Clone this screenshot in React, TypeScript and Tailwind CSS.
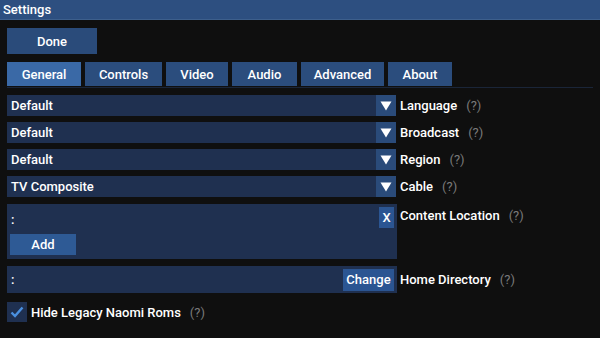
const tabs = [
  { name: 'General', w: 'w-[74px]', active: true },
  { name: 'Controls', w: 'w-[77px]' },
  { name: 'Video', w: 'w-[62px]' },
  { name: 'Audio', w: 'w-[65px]' },
  { name: 'Advanced', w: 'w-[83px]' },
  { name: 'About', w: 'w-[64px]' },
];

const combos = [
  { value: 'Default', label: 'Language' },
  { value: 'Default', label: 'Broadcast' },
  { value: 'Default', label: 'Region' },
  { value: 'TV Composite', label: 'Cable' },
];

const Help = () => <span className="ml-[9px] text-[#7a7a7a] font-normal">(?)</span>;

const Combo = ({ value, label }: { value: string; label: string }) => (
  <div className="flex items-center h-[21px]">
    <div className="flex w-[389px] h-full bg-[#1f3050]">
      <div className="flex-1 flex items-center px-[4px]">{value}</div>
      <div className="w-[20px] h-full bg-[#2a4b7a] flex items-center justify-center">
        <svg width="12" height="10" viewBox="0 0 12 10">
          <path d="M0.5 0.5 L11.5 0.5 L6 9.5 Z" fill="#ffffff" />
        </svg>
      </div>
    </div>
    <div className="ml-[4px] flex items-center">
      {label}
      <Help />
    </div>
  </div>
);

export default function App() {
  return (
    <div
      className="w-[600px] h-[338px] bg-[#0f0f0f] text-white text-[13px] font-medium leading-none overflow-hidden"
      style={{ fontFamily: 'Roboto, "Noto Sans", sans-serif' }}
    >
      <div className="h-[20px] bg-[#2d4f80] border-b border-[#3d5f8c] flex items-center px-[3px]">
        Settings
      </div>
      <div className="px-[7px] pt-[8px]">
        <button className="w-[90px] h-[26px] bg-[#2a4b7a] flex items-center justify-center">Done</button>

        <div className="mt-[8px] flex gap-[4px] h-[26px] pb-[1px] border-b border-[#1a2538]">
          {tabs.map((t) => (
            <div
              key={t.name}
              className={`${t.w} h-full flex items-center justify-center ${t.active ? 'bg-[#3a69a6]' : 'bg-[#2b4d7d]'}`}
            >
              {t.name}
            </div>
          ))}
        </div>

        <div className="mt-[7px] flex flex-col gap-[6px]">
          {combos.map((c, i) => (
            <Combo key={i} value={c.value} label={c.label} />
          ))}

          <div className="flex items-start mt-[1px]">
            <div className="w-[390px] h-[55px] bg-[#1f3050] flex flex-col px-[3px] pt-[3px]">
              <div className="flex justify-between h-[21px]">
                <span className="pl-[1px] pt-[6px]">:</span>
                <div className="w-[15px] h-[21px] bg-[#2b5592] flex items-center justify-center">X</div>
              </div>
              <div className="mt-[6px] w-[66px] h-[21px] bg-[#2e5a95] flex items-center justify-center">Add</div>
            </div>
            <div className="ml-[3px] pt-[5px] flex items-center">
              Content Location
              <Help />
            </div>
          </div>

          <div className="flex items-center mt-[1px]">
            <div className="w-[390px] h-[27px] bg-[#1f3050] flex items-center justify-between pl-[4px] pr-[3px]">
              <span>:</span>
              <div className="w-[51px] h-[22px] bg-[#2b5592] flex items-center justify-center">Change</div>
            </div>
            <div className="ml-[3px] flex items-center">
              Home Directory
              <Help />
            </div>
          </div>

          <div className="flex items-center mt-[3px]">
            <div className="w-[20px] h-[20px] bg-[#1f3050] flex items-center justify-center">
              <svg width="14" height="12" viewBox="0 0 14 12">
                <path d="M1.5 6.5 L5 10 L12.5 1.5" stroke="#4a90e0" strokeWidth="2.4" fill="none" />
              </svg>
            </div>
            <div className="ml-[4px] flex items-center">
              Hide Legacy Naomi Roms
              <Help />
            </div>
          </div>
        </div>
      </div>
    </div>
  );
}
